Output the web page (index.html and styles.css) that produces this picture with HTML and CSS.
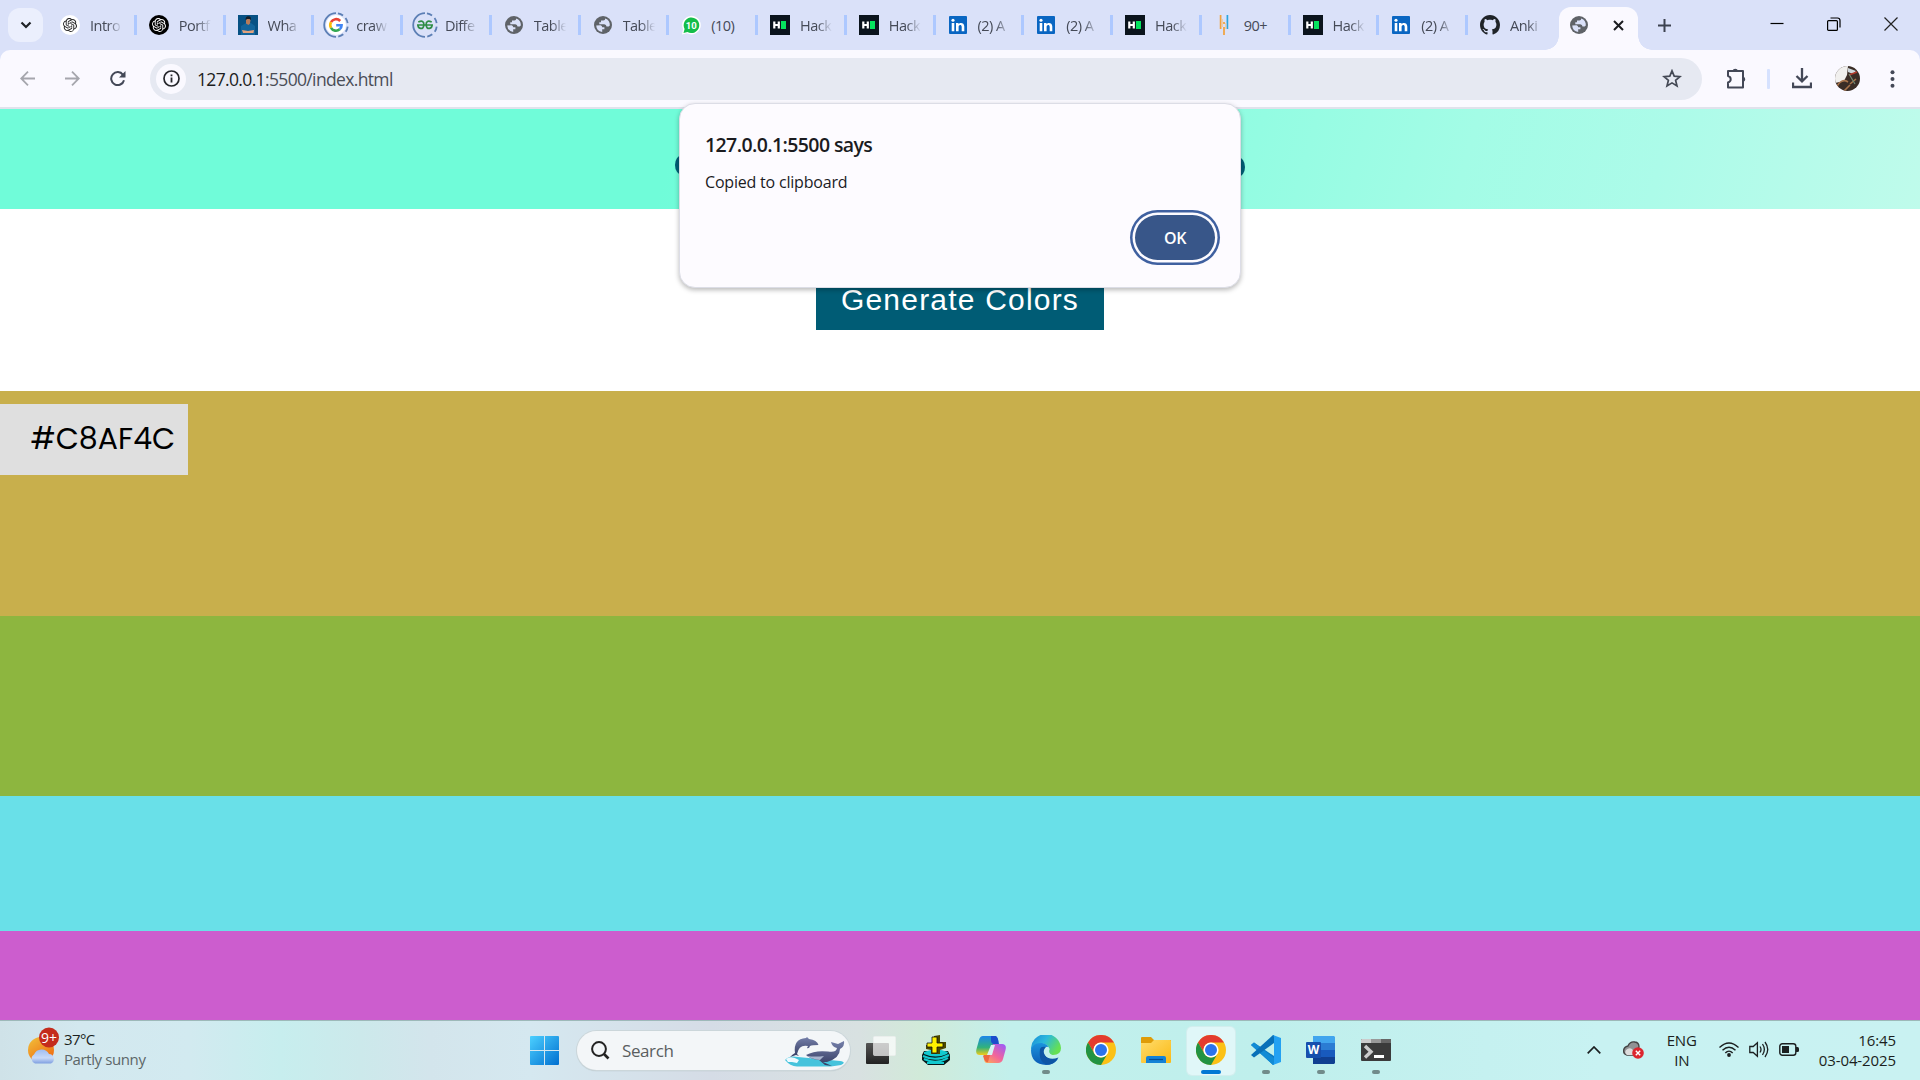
FILE: index.html
```html
<!DOCTYPE html>
<html lang="en">
<head>
<meta charset="utf-8">
<title>Color Generator</title>
<link rel="stylesheet" href="styles.css">
</head>
<body>
<svg class="defs" aria-hidden="true">
  <defs>
    <linearGradient id="win" x2="1" y2="1"><stop stop-color="#4cd0ff"/><stop offset="1" stop-color="#006fd0"/></linearGradient>
    <linearGradient id="sun" x2="0.7" y2="1"><stop stop-color="#f0c23c"/><stop offset="1" stop-color="#f06a10"/></linearGradient>
    <linearGradient id="cloud" x2="0" y2="1"><stop stop-color="#9fbdf3"/><stop offset=".6" stop-color="#c9daf8"/><stop offset="1" stop-color="#7e9fe0"/></linearGradient>
    <linearGradient id="dark" x2="0" y2="1"><stop stop-color="#555"/><stop offset="1" stop-color="#222"/></linearGradient>
    <linearGradient id="copA" x2="0" y2="1"><stop stop-color="#1c86ea"/><stop offset=".6" stop-color="#31b27c"/><stop offset="1" stop-color="#f2cc18"/></linearGradient>
    <linearGradient id="copB" x1=".8" x2="0" y2="1"><stop stop-color="#a45cf0"/><stop offset=".5" stop-color="#f2659b"/><stop offset="1" stop-color="#ffb050"/></linearGradient>
    <linearGradient id="edgeA" x2="1" y2=".5"><stop stop-color="#1788d8"/><stop offset=".5" stop-color="#2bb9dc"/><stop offset="1" stop-color="#66e052"/></linearGradient>
    <linearGradient id="edgeB" x2="0" y2="1"><stop stop-color="#1b94dd"/><stop offset="1" stop-color="#0b5bb5"/></linearGradient>
    <linearGradient id="folder" x2="1" y2="1"><stop stop-color="#ffdc6c"/><stop offset="1" stop-color="#fbb914"/></linearGradient>
    <linearGradient id="whale" x2="0" y2="1"><stop stop-color="#7580aa"/><stop offset="1" stop-color="#343b61"/></linearGradient>
  </defs>
  <symbol id="globe" viewBox="0 0 18 18"><circle cx="9" cy="9" r="9" fill="#5f6368"/><path d="M2.2 9.4 6.5 9.3Q8.2 9.6 8.2 11.2H10.4V13.2H8.2V15.9A7 7 0 0 1 2.2 9.4ZM11.2 2.5Q11.4 4.4 9.3 4.5H7V6.3H5.3V8.2H10.3Q12.4 8.4 12.5 10.4H14.3Q15.2 10.6 15.8 9.6A7 7 0 0 0 11.2 2.5Z" fill="#dae1f9"/></symbol>
  <symbol id="knot" viewBox="0 0 24 24"><path d="M22.28 9.82a5.98 5.98 0 0 0-.52-4.91 6.05 6.05 0 0 0-6.51-2.9A6.07 6.07 0 0 0 4.98 4.18a5.98 5.98 0 0 0-4 2.9 6.05 6.05 0 0 0 .74 7.1 5.98 5.98 0 0 0 .51 4.91 6.05 6.05 0 0 0 6.51 2.9A5.98 5.98 0 0 0 13.26 24a6.06 6.06 0 0 0 5.77-4.21 5.99 5.99 0 0 0 4-2.9 6.06 6.06 0 0 0-.75-7.07zM13.26 22.43a4.48 4.48 0 0 1-2.88-1.04l.14-.08 4.78-2.76a.8.8 0 0 0 .39-.68v-6.74l2.02 1.17v5.62a4.5 4.5 0 0 1-4.45 4.51zM3.6 18.3a4.47 4.47 0 0 1-.53-3.01l.14.09 4.78 2.76a.77.77 0 0 0 .78 0l5.84-3.37v2.33l-4.87 2.82A4.5 4.5 0 0 1 3.6 18.3zM2.34 7.9a4.49 4.49 0 0 1 2.37-1.98v5.69a.77.77 0 0 0 .39.67l5.81 3.36-2.02 1.17-4.9-2.79A4.5 4.5 0 0 1 2.34 7.9zm16.6 3.86-5.84-3.4 2.02-1.16 4.83 2.79a4.49 4.49 0 0 1-.68 8.1v-5.68a.79.79 0 0 0-.33-.65zm2.01-3.03-.14-.09-4.77-2.78a.78.78 0 0 0-.79 0L9.41 9.23V6.9l4.91-2.79a4.5 4.5 0 0 1 6.63 4.62zM8.31 12.86l-2.02-1.16V6.07a4.5 4.5 0 0 1 7.38-3.45l-.15.08-4.78 2.76a.8.8 0 0 0-.39.68zm1.1-2.36 2.6-1.5 2.6 1.5v3l-2.6 1.5-2.6-1.5z"/></symbol>
  <symbol id="ring" viewBox="0 0 26 26"><path d="M13 1.2A11.8 11.8 0 0 0 13 24.8" fill="none" stroke="#5c7fb5" stroke-width="1.8"/><path d="M13 1.2A11.8 11.8 0 0 1 13 24.8" fill="none" stroke="#5c7fb5" stroke-width="1.8" stroke-dasharray="5.5 3.5" stroke-dashoffset="-2"/></symbol>
  <symbol id="hr" viewBox="0 0 20 20"><path d="M0 0H20V20H0Z" fill="#0b141d"/><path d="M4.3 6.5V13.5M8.8 6.5V13.5M4 10H9" stroke="#fff" stroke-width="2.2"/><path d="M11 6H16V14H11Z" fill="#05e35e"/></symbol>
  <symbol id="li" viewBox="0 0 18 18"><rect width="18" height="18" rx="1" fill="#0a66c2"/><path d="M2.7 7H5.3V15.2H2.7ZM7 7H9.5V8.1C10.9 6.1 15.3 6.4 15.3 10.4V15.2H12.7V11C12.7 8.3 9.6 8.5 9.6 11V15.2H7Z" fill="#fff"/><circle cx="4" cy="4.2" r="1.55" fill="#fff"/></symbol>
  <symbol id="chrome" viewBox="0 0 30 30"><circle cx="15" cy="15" r="15" fill="#fbc116"/><path d="M2 7.5A15 15 0 0 1 28 7.5H15A7.5 7.5 0 0 0 8.5 18.75Z" fill="#e33b2e"/><path d="M2 7.5 8.5 18.75A7.5 7.5 0 0 0 21.5 18.75L15 30A15 15 0 0 1 2 7.5Z" fill="#229342"/><circle cx="15" cy="15" r="7.6" fill="#fff"/><circle cx="15" cy="15" r="6" fill="#2b73ec"/></symbol>
</svg>

<header class="tabstrip">
  <button class="tab-search" aria-label="Search tabs"><svg width="12" height="8" viewBox="0 0 12 8"><path d="M1.5 1.5 6 6 10.5 1.5" fill="none" stroke="#1f2126" stroke-width="2.2"/></svg></button>
  <div class="tabs">
    <div class="tab"><svg class="fav" viewBox="0 0 20 20"><circle cx="10" cy="10" r="10" fill="#fff"/><use href="#knot" x="3" y="3" width="14" height="14" fill="#222"/></svg><span>Intro</span></div>
    <div class="tab"><svg class="fav" viewBox="0 0 20 20"><circle cx="10" cy="10" r="10"/><use href="#knot" x="3" y="3" width="14" height="14" fill="#fff"/></svg><span>Portf</span></div>
    <div class="tab"><svg class="fav" viewBox="0 0 20 20"><path d="M0 0H20V20H0Z" fill="#075184"/><path d="M3 20V11L8 8H13L17 11V20Z" fill="#12649b"/><path d="M8 8.5V5Q10.5 0 12.5 5L12 8.5 10.5 10Z" fill="#b77b59"/><path d="M7.5 5Q7.5 1 10.5 1.3 13.6 1.4 12.8 5L11.5 4H9Z" fill="#151d26"/><path d="M4 15 10 16 16 15 15.5 18H5Z" fill="#e2a27d"/></svg><span>Wha</span></div>
    <div class="tab"><svg class="fav wide" viewBox="0 0 26 26"><circle cx="13" cy="13" r="10" fill="#fff"/><use href="#ring"/><g fill="none" stroke-width="2.6"><path d="M17.2 9A5.7 5.7 0 0 0 8 10.2" stroke="#ea4335"/><path d="M8 10.2A5.7 5.7 0 0 0 8 15.8" stroke="#fbbc05"/><path d="M8 15.8A5.7 5.7 0 0 0 16.7 17.3" stroke="#34a853"/><path d="M16.7 17.3A5.5 5.5 0 0 0 18.6 13.2H13.2" stroke="#4285f4"/></g></svg><span>craw</span></div>
    <div class="tab"><svg class="fav wide" viewBox="0 0 26 26"><use href="#ring"/><path d="M5 13H21M6.3 10Q12 7.4 11.9 12.8 11.4 17 8.5 16.4 6 15.8 6 13.2M19.7 10Q14 7.4 14.1 12.8 14.6 17 17.5 16.4 20 15.8 20 13.2" fill="none" stroke="#2f8d46" stroke-width="1.7"/></svg><span>Diffe</span></div>
    <div class="tab"><svg class="fav sm"><use href="#globe"/></svg><span>Table</span></div>
    <div class="tab"><svg class="fav sm"><use href="#globe"/></svg><span>Table</span></div>
    <div class="tab"><svg class="fav" viewBox="0 0 20 20"><path d="M1 19.5 2 14A9.3 9.3 0 1 1 6 18.3Z" fill="#fff"/><path d="M2.5 18 3.6 14A7.8 7.8 0 1 1 6.5 17Z" fill="#14bd4a"/><text x="10.3" y="13.8" text-anchor="middle" class="badge-num">10</text></svg><span class="whole">(10)</span></div>
    <div class="tab"><svg class="fav"><use href="#hr"/></svg><span>Hack</span></div>
    <div class="tab"><svg class="fav"><use href="#hr"/></svg><span>Hack</span></div>
    <div class="tab"><svg class="fav sm"><use href="#li"/></svg><span>(2) A</span></div>
    <div class="tab"><svg class="fav sm"><use href="#li"/></svg><span>(2) A</span></div>
    <div class="tab"><svg class="fav"><use href="#hr"/></svg><span>Hack</span></div>
    <div class="tab"><svg class="fav" viewBox="0 0 20 20"><path d="M6.6 0V14M10 12V20M10 7V9" stroke="#f1a23c" stroke-width="1.7"/><path d="M13.4 0V14" stroke="#2aa5de" stroke-width="1.7"/><path d="M8.3 4V12M11.8 8V14" stroke="#f3c896"/></svg><span class="whole">90+</span></div>
    <div class="tab"><svg class="fav"><use href="#hr"/></svg><span>Hack</span></div>
    <div class="tab"><svg class="fav sm"><use href="#li"/></svg><span>(2) A</span></div>
    <div class="tab last"><svg class="fav" viewBox="0 0 16 16"><path fill="#1f2328" d="M8 0C3.58 0 0 3.58 0 8c0 3.54 2.29 6.53 5.47 7.59.4.07.55-.17.55-.38 0-.19-.01-.82-.01-1.49-2.01.37-2.53-.49-2.69-.94-.09-.23-.48-.94-.82-1.13-.28-.15-.68-.52-.01-.53.63-.01 1.08.58 1.23.82.72 1.21 1.87.87 2.33.66.07-.52.28-.87.51-1.07-1.78-.2-3.64-.89-3.64-3.95 0-.87.31-1.59.82-2.15-.08-.2-.36-1.02.08-2.12 0 0 .67-.21 2.2.82.64-.18 1.32-.27 2-.27s1.36.09 2 .27c1.53-1.04 2.2-.82 2.2-.82.44 1.1.16 1.92.08 2.12.51.56.82 1.27.82 2.15 0 3.07-1.87 3.75-3.65 3.95.29.25.54.73.54 1.48 0 1.07-.01 1.93-.01 2.2 0 .21.15.46.55.38A8.01 8.01 0 0 0 16 8c0-4.42-3.58-8-8-8Z"/></svg><span>Anki</span></div>
  </div>
  <div class="tab-active"><svg class="fav sm"><use href="#globe"/></svg><svg width="11" height="11" viewBox="0 0 11 11"><path d="M1 1 10 10M10 1 1 10" stroke="#1b1c20" stroke-width="2"/></svg></div>
  <svg class="newtab" width="13" height="13" viewBox="0 0 13 13"><path d="M6.5 0V13M0 6.5H13" stroke="#3c4250" stroke-width="2"/></svg>
  <div class="window-controls">
    <svg width="14" height="14" viewBox="0 0 14 14"><path d="M.5 6.5H13.5" stroke="#000" stroke-width="1.2"/></svg>
    <svg width="14" height="14" viewBox="0 0 14 14"><g fill="none" stroke="#000" stroke-width="1.2"><rect x=".6" y="3.6" width="9.8" height="9.8" rx="1"/><path d="M3.5 1H10.5Q13 1 13 3.5V10.5"/></g></svg>
    <svg width="14" height="14" viewBox="0 0 14 14"><path d="M.5.5 13.5 13.5M13.5.5.5 13.5" stroke="#222" stroke-width="1.2"/></svg>
  </div>
</header>

<nav class="toolbar">
  <div class="nav-buttons">
    <svg width="15" height="15" viewBox="0 0 15 15"><path d="M15 7.5H1.2M8 .7 1.2 7.5 8 14.3" fill="none" stroke="#a5a6ad" stroke-width="1.8"/></svg>
    <svg width="15" height="15" viewBox="0 0 15 15"><path d="M0 7.5H13.8M7 .7 13.8 7.5 7 14.3" fill="none" stroke="#a5a6ad" stroke-width="1.8"/></svg>
    <svg width="16" height="16" viewBox="0 0 16 16"><path d="M14 9.2A6.5 6.5 0 1 1 13 3.8L14.5 5.5" fill="none" stroke="#434857" stroke-width="2"/><path d="M15.5 0V6.5H9Z" fill="#434857"/></svg>
  </div>
  <div class="address">
    <span class="site-info"><svg width="17" height="17" viewBox="0 0 17 17"><circle cx="8.5" cy="8.5" r="7.5" fill="none" stroke="#25262b" stroke-width="1.7"/><path d="M8.5 7.5V12.5M8.5 4.5V6.3" stroke="#25262b" stroke-width="1.8"/></svg></span>
    <span class="url"><b>127.0.0.1</b>:5500/index.html</span>
    <svg class="star" width="20" height="19" viewBox="0 0 20 19"><path d="M10 1.8 12.2 7.1 18 7.6 13.6 11.3 15 17 10 13.9 5 17 6.4 11.3 2 7.6 7.8 7.1Z" fill="none" stroke="#444955" stroke-width="1.7"/></svg>
  </div>
  <svg class="ext" width="21" height="21" viewBox="0 0 21 21"><path d="M2 3H17V19.5H2V14.5Q4.7 13.6 4.7 11.2 4.7 8.8 2 8Z" fill="none" stroke="#434857" stroke-width="2" stroke-linejoin="round"/><path d="M6.5 3A2.8 2.8 0 0 1 12 3ZM17 8.5A2.8 2.8 0 0 1 17 14Z" fill="#434857"/></svg>
  <i class="bar-sep"></i>
  <svg class="download" width="20" height="21" viewBox="0 0 20 21"><path d="M10 0V13M4.5 8 10 13.3 15.5 8M1 14.5V19H19V14.5" fill="none" stroke="#434857" stroke-width="2.3"/></svg>
  <svg class="avatar" width="25" height="25" viewBox="0 0 25 25"><clipPath id="av"><circle cx="12.5" cy="12.5" r="12.5"/></clipPath><g clip-path="url(#av)"><path d="M0 0H25V25H0Z" fill="#3a2d26"/><path d="M0 0H13L12 9 9 15 0 17Z" fill="#f1f0ee"/><path d="M13 2 21 5 18 8 13 6Z" fill="#cfd8dc"/><path d="M14 9 22 6" stroke="#b33a2b" stroke-width="1.4"/><path d="M2 20Q7 12 13 16M15 18 21 13M9 25 15 19" stroke="#a9744b" stroke-width="1.6" fill="none"/><path d="M14 8 20 18" stroke="#728b75" stroke-width="1.2"/></g></svg>
  <svg class="menu" width="5" height="18" viewBox="0 0 5 18"><g fill="#434857"><circle cx="2.5" cy="2.2" r="2"/><circle cx="2.5" cy="9" r="2"/><circle cx="2.5" cy="15.8" r="2"/></g></svg>
</nav>

<main class="page">
  <div class="banner"><i></i><i></i></div>
  <section class="generate"><button>Generate Colors</button></section>
  <section class="swatch gold"><span>#C8AF4C</span></section>
  <section class="swatch green"></section>
  <section class="swatch cyan"></section>
  <section class="swatch magenta"></section>
</main>

<div class="dialog" role="alertdialog">
  <h2>127.0.0.1:5500 says</h2>
  <p>Copied to clipboard</p>
  <button>OK</button>
</div>

<footer class="taskbar">
  <div class="weather">
    <svg width="34" height="40" viewBox="0 0 34 40"><circle cx="13" cy="23" r="13" fill="url(#sun)"/><path d="M7 36.5A5 5 0 0 1 6 27.5 8.3 8.3 0 0 1 21 27 5 5 0 0 1 23 36.5Z" fill="url(#cloud)"/><circle cx="21" cy="10.5" r="10" fill="#c42b1c"/><text x="21" y="15.5" text-anchor="middle" class="weather-badge">9+</text></svg>
    <div><strong>37°C</strong><span>Partly sunny</span></div>
  </div>
  <div class="apps">
    <div class="app"><svg width="29" height="29" viewBox="0 0 29 29"><path d="M0 1Q0 0 1 0H14V14H0ZM15 0H28Q29 0 29 1V14H15ZM0 15H14V29H1Q0 29 0 28ZM15 15H29V28Q29 29 28 29H15Z" fill="url(#win)"/></svg></div>
    <div class="search"><svg width="19" height="19" viewBox="0 0 19 19"><circle cx="8" cy="8" r="6.9" fill="none" stroke="#222" stroke-width="2"/><path d="M13 13 17.5 17.5" stroke="#222" stroke-width="2.6"/></svg><span>Search</span>
      <svg class="whale" width="60" height="30" viewBox="0 0 60 30"><path d="M0 23Q4 18 13 20L55 24Q62 25 56 28L46 29.5H12Q5 29 0 23Z" fill="#45c3dc"/><path d="M1 22Q6 18 14 23L12 26 7 25 3 25Z" fill="#eefaff"/><path d="M5 20Q8 17 10 16 8 2 21 1L22 0 24 2Q32 3 33.5 8 27 8 25 9 24 12 22 11L23 9Q14 7 12 17L14 19 11 18Z" fill="url(#whale)"/><path d="M21 18Q30 13 43 14.5 51 16 52 11 47 10 46 5L53 7 59 4Q60 9 55 12 55 21 42 25L38 25 47 29 40 28 34 23Q25 22 21 18Z" fill="url(#whale)"/><path d="M22 19Q31 20 39 19L35 23Q27 22 22 19Z" fill="#a9b5cf"/></svg></div>
    <div class="app"><svg width="30" height="28" viewBox="0 0 30 28"><rect y="7" width="23" height="21" rx="1" fill="url(#dark)"/><rect x="7.5" y=".5" width="22" height="19" rx="1" fill="#fff" fill-opacity=".7" stroke="#eee" stroke-opacity=".6"/></svg></div>
    <div class="app"><svg width="28" height="30" viewBox="0 0 28 30"><path d="M2 16H26L28 20V25L22 30H6L0 25V20Z" fill="#071819"/><path d="M2 17Q14 12 26 17L25 19Q14 24 2 19Z" fill="#12c9cf"/><path d="M1 21Q14 27 27 20M2 24Q14 30 26 23M5 28H22" fill="none" stroke="#12c9cf" stroke-width="2"/><path d="M12 1 18 0V7H24V13L18 15V19H9V15L4 14V10L11 9Z" fill="#4c4900"/><path d="M10 2H15V8H21V12H15V18H10V12H5V8H10Z" fill="#fff200" stroke="#111" stroke-width=".8"/></svg></div>
    <div class="app"><svg width="30" height="28" viewBox="0 0 30 28"><path d="M7 0H19Q22 1 22 5L17 9 12 19H4Q-1 19 .5 13L3 4Q4 0 7 0Z" fill="url(#copA)"/><path d="M15 0H20Q22 1 23 8H18Q15 8 15 4Z" fill="#1b4dcc"/><path d="M23 8H26Q31 8 29.5 14L27 23Q26 27 22 27H11Q8 27 8 22L13 19 17 8Z" fill="url(#copB)"/><path d="M8 19H14L12 26Q9 27 7 20Z" fill="#ed6741"/><path d="M15 9H19L16 19H11Z" fill="#d6f3f4"/></svg></div>
    <div class="app open"><svg width="30" height="30" viewBox="0 0 30 30"><path d="M0 15A15 15 0 0 1 30 13Q30 20 22 20 18 20 17.5 17 20 12 14 9 5 7 0 15Z" fill="url(#edgeA)"/><path d="M0 15Q2 7 11 8 17 9 18 13 14 11 13 16 12 25 22 26L27 24A15 15 0 0 1 15 30Q0 29 0 15Z" fill="url(#edgeB)"/><path d="M9 14Q7 28 17 29.5 24 29 27.5 22.5 18 26 14 20 12 16 15 12 10 11 9 14Z" fill="#0e55a5"/><path d="M15 12Q11 16 14 20 16 23 20 23L28 20Q25 21 21 20 17 18 18.5 14 18 11 15 12Z" fill="#c3f0ec"/></svg></div>
    <div class="app"><svg width="30" height="30"><use href="#chrome"/></svg></div>
    <div class="app"><svg width="30" height="28" viewBox="0 0 30 28"><path d="M0 2Q0 1 1 1H10L13 4H30V10H0Z" fill="#df9c08"/><path d="M0 7H10L13 4H29Q30 4 30 5V26Q30 27 29 27H1Q0 27 0 26Z" fill="url(#folder)"/><path d="M5 27V22Q5 20 7 20H23Q25 20 25 22V27Z" fill="#1482d6"/><path d="M8 23.5H22" stroke="#074e93" stroke-width="1.2"/></svg></div>
    <div class="app open current"><svg width="30" height="30"><use href="#chrome"/></svg></div>
    <div class="app open"><svg width="30" height="30" viewBox="0 0 30 30"><path d="M0 10 3 7.5 23 21V29L22 30Z" fill="#0b7bc4"/><path d="M0 10 3 7.5 23 23V30L22 30Z" fill="#118bd5"/><path d="M0 20 3 22.5 23 8V0H22Z" fill="#0870b8"/><path d="M22 0 30 3V27L22 30 23 28V2Z" fill="#23a1f2"/></svg></div>
    <div class="app open"><svg width="29" height="28" viewBox="0 0 29 28"><path d="M7 0H28L29 1V7H7Z" fill="#41a5ee"/><path d="M7 7H29V14H7Z" fill="#2b7cd3"/><path d="M7 14H29V21H7Z" fill="#185abd"/><path d="M7 21H29V27L28 28H7Z" fill="#103f91"/><rect y="6" width="15" height="16" rx="1" fill="#174fad"/><text x="7.5" y="18" text-anchor="middle" class="word-w">W</text></svg></div>
    <div class="app open"><svg width="30" height="22" viewBox="0 0 30 22"><rect width="30" height="22" rx="1" fill="#3b3b3b"/><path d="M0 1Q0 0 1 0H10V4H0Z" fill="#ccc"/><path d="M10 0H20V4H10Z" fill="#999"/><path d="M20 0H29L30 1V4H20Z" fill="#666"/><path d="M4 7 10 12.7 4 18.5" fill="none" stroke="#ccc" stroke-width="3.4"/><path d="M13 17.5H23" stroke="#fff" stroke-width="3"/></svg></div>
  </div>
  <div class="tray">
    <svg class="chevron" width="14" height="8" viewBox="0 0 14 8"><path d="M.7 7.3 7 1 13.3 7.3" fill="none" stroke="#1b1f20" stroke-width="1.7"/></svg>
    <svg class="drive" width="22" height="18" viewBox="0 0 22 18"><path d="M4 14Q0 13 .8 9 1 6 5 5 7 0 12 1 16 1.5 16 6L11 14Z" fill="#909294" stroke="#444" stroke-width="1.4"/><path d="M4 14Q1 12 3 9 6 6 9 8L13 14Z" fill="#ddd"/><circle cx="15" cy="12" r="5.8" fill="#dc262e"/><path d="M12.8 9.8 17.2 14.2M17.2 9.8 12.8 14.2" stroke="#fff" stroke-width="1.4"/></svg>
    <div class="lang">ENG<br>IN</div>
    <svg width="20" height="15" viewBox="0 0 20 15"><g fill="none" stroke="#1b1f20" stroke-width="1.4"><path d="M.5 5.5Q10-3.6 19.5 5.5M3.5 8.3Q10 2 16.5 8.3M6.3 11Q10 7.2 13.7 11"/></g><circle cx="10" cy="13" r="1.9" fill="#1b1f20"/></svg>
    <svg width="20" height="17" viewBox="0 0 20 17"><g fill="none" stroke="#1b1f20" stroke-width="1.3"><path d="M.8 5.5H4.2L8.4 1.8V15.2L4.2 11.5H.8ZM11 5.5Q13 8.5 11 11.5M13.5 3Q17.2 8.5 13.5 14M16 1Q21.5 8.5 16 16"/></g></svg>
    <svg width="20" height="13" viewBox="0 0 20 13"><rect x=".8" y=".8" width="16" height="11.4" rx="2.5" fill="none" stroke="#1b1f20" stroke-width="1.4"/><path d="M3 3H10V10H3Z" fill="#1b1f20"/><path d="M17 4H18.5Q20 4 20 5.5V7.5Q20 9 18.5 9H17Z" fill="#1b1f20"/></svg>
    <div class="clock">16:45<br>03-04-2025</div>
  </div>
</footer>
</body>
</html>
```
FILE: styles.css
```css
* { box-sizing: border-box; }
body {
  margin: 0;
  width: 1920px;
  height: 1080px;
  overflow: hidden;
  position: relative;
  display: flex;
  flex-direction: column;
  background: #dae1f9;
  font-family: "Segoe UI", "Open Sans", sans-serif;
}
svg { display: block; flex: none; }
button { font: inherit; border: 0; padding: 0; }
.defs { position: absolute; width: 0; height: 0; }

/* Tab strip */
.tabstrip {
  flex: none;
  height: 50px;
  display: flex;
  align-items: center;
}
.tab-search {
  width: 35px;
  height: 34px;
  margin-left: 8px;
  border-radius: 12px;
  background: #ebeffd;
  display: grid;
  place-items: center;
}
.tabs { display: flex; margin-left: 5px; }
.tab {
  width: 88.75px;
  height: 20px;
  padding-left: 12px;
  display: flex;
  align-items: center;
  border-right: 3px solid #adc8ff;
}
.tab.last { border-color: transparent; }
.fav { width: 20px; height: 20px; margin-right: 10px; }
.fav.sm { width: 18px; height: 18px; margin: 0 11px 0 1px; }
.fav.wide { width: 26px; height: 26px; margin: 0 7px 0 -3px; }
.badge-num { font: 700 9.5px Roboto, sans-serif; fill: #fff; }
.tab span {
  width: 35px;
  white-space: nowrap;
  font-size: 14.5px;
  letter-spacing: -.5px;
  color: #454a57;
  mask-image: linear-gradient(90deg, #000 50%, transparent 92%);
}
.tab span.whole { mask-image: none; }
.tab-active {
  position: relative;
  align-self: flex-end;
  width: 79px;
  height: 43px;
  margin-left: 2.5px;
  padding: 0 14px 7px 10px;
  border-radius: 12px 12px 0 0;
  background: #faf9ff;
  display: flex;
  align-items: center;
  justify-content: space-between;
}
.tab-active::before, .tab-active::after {
  content: "";
  position: absolute;
  bottom: 0;
  width: 14px;
  height: 14px;
}
.tab-active::before { left: -14px; background: radial-gradient(circle at 0 0, transparent 13.5px, #faf9ff 14px); }
.tab-active::after { right: -14px; background: radial-gradient(circle at 100% 0, transparent 13.5px, #faf9ff 14px); }
.newtab { margin-left: 19.5px; }
.window-controls { margin: 0 22px 2px auto; display: flex; gap: 43px; }

/* Toolbar */
.toolbar {
  flex: none;
  height: 59px;
  padding: 0 25px 0 20px;
  display: flex;
  align-items: center;
  background: #faf9ff;
  border-bottom: 2px solid #e0e2ec;
  border-radius: 10px 10px 0 0;
}
.nav-buttons { display: flex; gap: 30px; width: 130px; }
.address {
  width: 1552px;
  height: 42px;
  padding: 0 20px 0 6px;
  border-radius: 21px;
  background: #e6e9f2;
  display: flex;
  align-items: center;
}
.site-info {
  width: 30px;
  height: 30px;
  border-radius: 50%;
  background: #faf9ff;
  display: grid;
  place-items: center;
}
.url { margin-left: 11px; padding-top: 1px; font-size: 17.5px; letter-spacing: -.65px; color: #4a4d57; }
.url b { font-weight: 400; color: #1b1c20; }
.star { margin-left: auto; }
.ext { margin-left: 24px; }
.bar-sep { width: 3px; height: 20px; margin: 0 22px 0 20px; background: #d6e2ff; border-radius: 1px; }
.avatar { margin-left: 23px; }
.menu { margin-left: auto; }

/* Page content */
.page { flex: none; height: 911px; background: #fff; }
.banner {
  height: 100px;
  padding: 46px 675px 0;
  display: flex;
  justify-content: space-between;
  background: linear-gradient(105deg, #70fcd9 35%, #93fce2 65%, #a3fce6 76%, #acfbe9 86%, #bffbeb 100%);
}
.banner i { width: 14px; height: 20px; border-radius: 50%; background: #005c75; }
.banner i + i { margin-top: 2px; }
.generate { height: 182px; display: flex; justify-content: center; align-items: flex-end; padding-bottom: 61px; }
.generate button {
  width: 288px;
  height: 60px;
  background: #005c75;
  color: #fff;
  font: 30px "Liberation Sans", Arial, sans-serif;
  letter-spacing: 1.2px;
}
.swatch span {
  display: flex;
  align-items: center;
  width: 188px;
  height: 71px;
  padding: 0 0 2px 30.5px;
  background: #dfdfdf;
  color: #000;
  font: 30px Poppins, Lato, sans-serif;
}
.gold { height: 225px; padding-top: 13px; background: #c8af4c; }
.green { height: 180px; background: #8db63f; }
.cyan { height: 135px; background: #69e0e8; }
.magenta { height: 89px; background: #cc5dce; }

/* Alert */
.dialog {
  position: absolute;
  left: 679px;
  top: 103px;
  width: 562px;
  height: 185px;
  padding: 27px 24px;
  border: 1px solid #dcdde6;
  border-radius: 16px;
  background: #fdfbff;
  box-shadow: 0 2px 5px rgba(0, 0, 0, .28);
  display: flex;
  flex-direction: column;
}
.dialog h2 { margin: 0 0 0 1px; font-size: 19.5px; font-weight: 600; line-height: 28px; letter-spacing: -.6px; color: #1b1b1f; }
.dialog p { margin: 11px 0 0 1px; font-size: 16px; line-height: 24px; letter-spacing: -.2px; color: #1b1b1f; }
.dialog button {
  align-self: flex-end;
  width: 80px;
  height: 47px;
  margin: 21px 1px 0 0;
  border-radius: 24px;
  background: #385689;
  color: #fff;
  font-size: 16px;
  font-weight: 600;
  letter-spacing: -.4px;
  box-shadow: 0 0 0 2.5px #fdfbff, 0 0 0 5px #3f60a0;
}

/* Taskbar */
.taskbar {
  flex: none;
  height: 60px;
  display: grid;
  grid-template-columns: 517px auto 1fr;
  border-top: 1px solid #9db9b9;
  background: linear-gradient(90deg, #cfe2e8 0, #d3e8ef 80px, #d2eaf0 190px, #c7eeee 280px, #cce9eb 360px, #d3e5ec 430px, #d5e8f0 530px, #d5dce6 710px, #d8e1e1 860px, #d1ead9 920px, #c2f0ec 1010px, #bfefec 1260px, #c8f2f2 1600px, #c9f2f2 1920px);
}
.weather { display: flex; padding: 6px 0 0 28px; }
.weather div { display: flex; flex-direction: column; margin-left: 2px; padding-top: 2px; font-size: 15px; line-height: 20px; letter-spacing: -.4px; }
.weather strong { font-weight: 400; color: #1b1f20; letter-spacing: -.6px; }
.weather span { color: #5c6668; }
.weather-badge { font: 14px "Open Sans", sans-serif; fill: #fff; }
.apps { display: flex; align-items: center; }
.app { position: relative; width: 55px; height: 48px; display: grid; place-items: center; }
.app svg { margin-bottom: 1px; }
.open::after {
  content: "";
  position: absolute;
  left: 23.5px;
  bottom: 1px;
  width: 8px;
  height: 4px;
  border-radius: 2px;
  background: #718b8a;
}
.current { width: 48px; margin: 0 3.5px; background: #e0f7f8; border-radius: 5px; box-shadow: 0 0 0 1px #d2eeee; }
.current::after { left: 14px; width: 20px; background: #0078d4; }
.search {
  width: 273px;
  height: 39px;
  margin: 0 3px 1px 5px;
  padding: 0 6px 0 14px;
  border-radius: 20px;
  background: #f3f6f8;
  box-shadow: 0 0 0 1px #cbd6da, 0 1px 1px #9cabb0;
  display: flex;
  align-items: center;
}
.search span { margin-left: 12px; font-size: 17px; letter-spacing: -.4px; color: #5a5e60; }
.search .whale { margin: 3px -1px 0 auto; }
.word-w { font: 700 12px "Open Sans", sans-serif; fill: #fff; }
.tray { display: flex; align-items: center; padding: 0 24px 2px 0; justify-content: flex-end; color: #1b1f20; font-size: 15px; line-height: 20px; letter-spacing: -.15px; }
.drive { margin-left: 22px; }
.lang { width: 74px; text-align: center; }
.lang ~ svg + svg { margin-left: 10px; }
.clock { margin-left: 20px; text-align: right; letter-spacing: -.1px; }
```
